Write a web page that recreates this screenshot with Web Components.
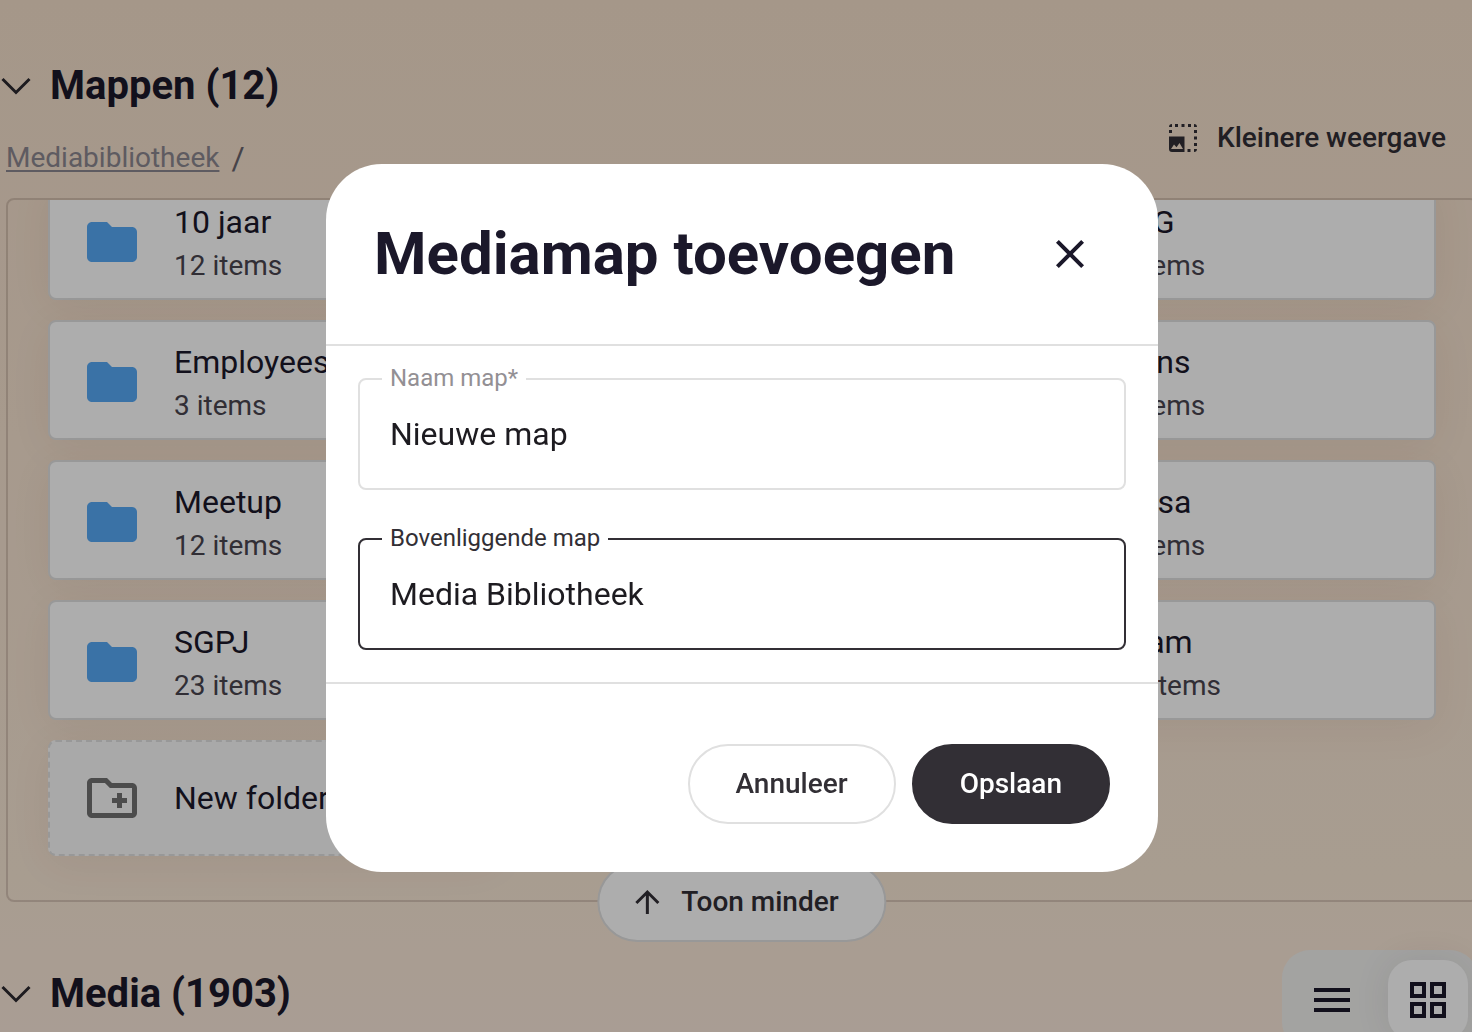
<!DOCTYPE html>
<html lang="nl">
<head>
<meta charset="utf-8">
<meta name="viewport" content="width=device-width, initial-scale=1">
<title>Mediabibliotheek</title>
<style>
    html {
        height: 100%;
    }
    body {
        margin: 0;
        height: 100%;
        overflow: hidden;
        font-family: Roboto, sans-serif;
        color: #1b182a;
        background: linear-gradient(#f4dfcb, #f8e7d5 85%, #fae8da);
    }
    .toolbar {
        display: flex;
        justify-content: space-between;
        align-items: flex-end;
        height: 88px;
        padding: 0 26px 0 6px;
    }
    .media-bar {
        display: flex;
        justify-content: space-between;
        align-items: flex-start;
        margin: 48px -6px 0 0;
    }
</style>
</head>
<body>
<media-page>
    <section-title style="padding-top: 62px">Mappen (12)</section-title>
    <div class="toolbar">
        <bread-crumb>Mediabibliotheek</bread-crumb>
        <view-switch>Kleinere weergave</view-switch>
    </div>
    <folder-panel></folder-panel>
    <div class="media-bar">
        <section-title style="padding-top: 20px">Media (1903)</section-title>
        <layout-toggle></layout-toggle>
    </div>
</media-page>
<modal-dialog heading="Mediamap toevoegen">
    <text-field label="Naam map*" value="Nieuwe map"></text-field>
    <text-field label="Bovenliggende map" value="Media Bibliotheek" active></text-field>
    <pill-button slot="actions">Annuleer</pill-button>
    <pill-button slot="actions" primary>Opslaan</pill-button>
</modal-dialog>

<script>
    // every element gets its markup and styles from one html string
    function define(name, html, setup) {
        const template = document.createElement("template");
        template.innerHTML = html;

        class PageElement extends HTMLElement {
            constructor() {
                super();
                this.attachShadow({mode: 'open'});
                this.shadowRoot.appendChild(template.content.cloneNode(true));
            }

            connectedCallback() {
                if (setup) {
                    setup(this, this.shadowRoot);
                }
            }
        }
        window.customElements.define(name, PageElement);
    }

    define("media-page", `
        <style>
            :host { display: block; }
        </style>
        <main><slot></slot></main>
    `);

    define("section-title", `
        <style>
            :host { display: block; }
            div { display: flex; align-items: center; gap: 18px; }
            h2 { margin: 0; font-size: 40px; line-height: 48px; font-weight: 700; }
            button { display: flex; border: 0; padding: 0; background: none; color: #2b282e; }
            svg { width: 32px; height: 32px; }
        </style>
        <div>
            <button type="button" aria-label="Inklappen">
                <svg viewBox="0 0 32 32" fill="none" stroke="currentColor" stroke-width="3"><path d="M2.500 9 16 22.500 29.500 9"/></svg>
            </button>
            <h2><slot></slot></h2>
        </div>
    `);

    define("bread-crumb", `
        <style>
            :host { display: block; padding-bottom: 24px; font-size: 28px; line-height: 32px; color: #8b868f; }
            a { color: inherit; text-underline-offset: 3px; text-decoration-thickness: 2px; }
            nav { display: flex; gap: 12px; }
            span { font-size: 32px; color: #68636c; }
        </style>
        <nav><a href="#"><slot></slot></a><span>/</span></nav>
    `);

    define("view-switch", `
        <style>
            :host { display: block; padding-bottom: 44px; }
            button {
                display: flex;
                align-items: center;
                gap: 16px;
                border: 0;
                padding: 0;
                background: none;
                color: #322f35;
                font: 500 28px/32px Roboto, sans-serif;
            }
            svg { width: 36px; height: 36px; margin: -2px 0; }
        </style>
        <button type="button">
            <svg viewBox="0 0 36 36" fill="currentColor">
                <path d="M4 7a3 3 0 0 1 3-3v3zM10 4h3v3h-3zM16.500 4h3v3h-3zM23 4h3v3h-3zM29 4a3 3 0 0 1 3 3h-3zM4 10h3v3H4zM29 10h3v3h-3zM29 16.500h3v3h-3zM29 23h3v3h-3zM29 29h3a3 3 0 0 1-3 3zM22.500 29h3v3h-3z"/>
                <path fill-rule="evenodd" d="M4 16.500h15.500V32H7a3 3 0 0 1-3-3zM6 29h12l-3.500-6-3 4.200-2.500-2.700z"/>
            </svg>
            <slot></slot>
        </button>
    `);

    define("folder-card", `
        <style>
            :host {
                display: flex;
                align-items: center;
                gap: 32px;
                box-sizing: border-box;
                height: 120px;
                padding: 4px 32px 0;
                border: 2px solid #e0e0e0;
                border-radius: 8px;
                background: #fff;
                box-shadow: 0 8px 44px rgba(80, 40, 10, .06);
                white-space: nowrap;
                overflow: hidden;
            }
            :host([add]) {
                height: 116px;
                padding-top: 0;
                border-style: dashed;
                background: #fafafa;
            }
            svg { flex: none; width: 60px; height: 60px; fill: #56a8f5; }
            .new { display: none; fill: #707070; }
            :host([add]) .new { display: block; }
            :host([add]) .folder, :host([add]) .count { display: none; }
            .name { font-size: 32px; line-height: 48px; }
            .count { font-size: 28px; line-height: 40px; color: #49454f; }
        </style>
        <svg class="folder" viewBox="0 0 24 24"><path d="M10 4H4c-1.100 0-1.990.9-1.990 2L2 18c0 1.100.9 2 2 2h16c1.100 0 2-.9 2-2V8c0-1.100-.9-2-2-2h-8l-2-2z"/></svg>
        <svg class="new" viewBox="0 0 24 24"><path d="M20 6h-8l-2-2H4c-1.110 0-1.990.89-1.990 2L2 18c0 1.110.89 2 2 2h16c1.110 0 2-.89 2-2V8c0-1.110-.89-2-2-2zm0 12H4V6h5.170l2 2H20v10zm-8-4h2v2h2v-2h2v-2h-2v-2h-2v2h-2v2z"/></svg>
        <div>
            <div class="name"><slot></slot></div>
            <div class="count"><slot name="count"></slot></div>
        </div>
    `);

    const folders = [
        ["10 jaar", "12 items"], [], ["DSG", "3 items"],
        ["Employees", "3 items"], [], ["Icons", "3 items"],
        ["Meetup", "12 items"], [], ["Raisa", "3 items"],
        ["SGPJ", "23 items"], [], ["Team", "12 items"]
    ];

    define("folder-panel", `
        <style>
            :host {
                display: block;
                position: relative;
                margin: 0 -6px 0 6px;
                border: 2px solid rgba(70, 45, 40, .18);
                border-radius: 8px;
            }
            .scroll { overflow: hidden; padding: 0 40px 44px; }
            .grid {
                display: grid;
                grid-template-columns: repeat(3, 1fr);
                gap: 20px;
                margin-top: -20px;
            }
            .less {
                position: absolute;
                left: 50%;
                bottom: -42px;
                transform: translateX(-50%);
                display: flex;
                align-items: center;
                gap: 16px;
                height: 80px;
                padding: 0 46px 0 30px;
                border: 2px solid #e0e0e0;
                border-radius: 40px;
                background: #fff;
                color: #322f35;
                font: 500 28px/32px Roboto, sans-serif;
                white-space: nowrap;
            }
            svg { width: 36px; height: 36px; }
        </style>
        <div class="scroll"><div class="grid"></div></div>
        <button class="less" type="button">
            <svg viewBox="0 0 36 36" fill="none" stroke="currentColor" stroke-width="3"><path d="M18 30V8M7 19 18 8l11 11"/></svg>
            Toon minder
        </button>
    `, (host, root) => {
        const grid = root.querySelector(".grid");
        folders.forEach(([name, count]) => {
            const card = document.createElement("folder-card");
            if (name) {
                const items = document.createElement("span");
                items.slot = "count";
                items.textContent = count;
                card.append(name, items);
            }
            grid.appendChild(card);
        });
        const add = document.createElement("folder-card");
        add.setAttribute("add", "");
        add.textContent = "New folder";
        grid.appendChild(add);
    });

    define("layout-toggle", `
        <style>
            :host {
                display: flex;
                gap: 16px;
                padding: 10px;
                border-radius: 28px;
                background: #f0f0ee;
            }
            button {
                display: grid;
                place-items: center;
                width: 80px;
                height: 80px;
                border: 0;
                padding: 0;
                border-radius: 24px;
                background: none;
                color: #1b182a;
            }
            .on { background: #fff; box-shadow: 0 0 36px rgba(60, 40, 60, .09); }
            svg { width: 36px; height: 36px; }
        </style>
        <button type="button" aria-label="Lijst">
            <svg viewBox="0 0 36 36" fill="currentColor"><path d="M0 6h36v4H0zM0 16h36v4H0zM0 26h36v4H0z"/></svg>
        </button>
        <button class="on" type="button" aria-label="Raster">
            <svg viewBox="0 0 36 36" fill="none" stroke="currentColor" stroke-width="4"><path d="M2 2h12v12H2zM22 2h12v12H22zM2 22h12v12H2zM22 22h12v12H22z"/></svg>
        </button>
    `);

    define("text-field", `
        <style>
            :host { display: block; position: relative; --line: #e0e0e0; --label: #939094; }
            :host([active]) { --line: #322f35; --label: #322f35; }
            label {
                position: absolute;
                top: -14px;
                left: 24px;
                padding: 0 8px;
                background: #fff;
                color: var(--label);
                font-size: 24px;
                line-height: 28px;
            }
            input {
                display: block;
                box-sizing: border-box;
                width: 100%;
                height: 112px;
                padding: 0 30px;
                border: 2px solid var(--line);
                border-radius: 8px;
                outline: 0;
                background: none;
                color: #1d1b20;
                font: 32px Roboto, sans-serif;
            }
        </style>
        <input id="field" type="text">
        <label for="field"></label>
    `, (host, root) => {
        root.querySelector("label").textContent = host.getAttribute("label");
        root.querySelector("input").value = host.getAttribute("value");
    });

    define("pill-button", `
        <style>
            :host { display: block; }
            button {
                height: 80px;
                padding: 0 46px;
                border: 2px solid #e0e0e0;
                border-radius: 40px;
                background: #fff;
                color: #322f35;
                font: 500 28px/32px Roboto, sans-serif;
            }
            :host([primary]) button { border-color: #322f35; background: #322f35; color: #fff; }
        </style>
        <button type="button"><slot></slot></button>
    `);

    define("modal-dialog", `
        <style>
            :host {
                position: fixed;
                inset: 0;
                display: grid;
                place-items: center;
                padding: 4px 0 0 12px;
                background: rgba(0, 0, 0, .32);
            }
            section {
                width: min(832px, 100% - 32px);
                border-radius: 56px;
                background: #fff;
                overflow: hidden;
            }
            header {
                display: flex;
                align-items: center;
                justify-content: space-between;
                height: 180px;
                padding: 0 64px 0 48px;
                border-bottom: 2px solid #e0e0e0;
            }
            h1 { margin: 0; font-size: 60px; line-height: 72px; font-weight: 700; }
            .close { display: flex; border: 0; padding: 0; background: none; color: #1b182a; }
            svg { width: 48px; height: 48px; }
            .body { display: grid; gap: 48px; padding: 32px; }
            footer {
                display: flex;
                justify-content: flex-end;
                gap: 16px;
                padding: 60px 48px 48px;
                border-top: 2px solid #e0e0e0;
            }
        </style>
        <section role="dialog" aria-modal="true" aria-labelledby="title">
            <header>
                <h1 id="title"></h1>
                <button class="close" type="button" aria-label="Sluiten">
                    <svg viewBox="0 0 48 48" fill="none" stroke="currentColor" stroke-width="4"><path d="M11.400 11.400l25.200 25.200M36.600 11.400 11.400 36.600"/></svg>
                </button>
            </header>
            <div class="body"><slot></slot></div>
            <footer><slot name="actions"></slot></footer>
        </section>
    `, (host, root) => {
        root.querySelector("h1").textContent = host.getAttribute("heading");
    });
</script>
</body>
</html>
